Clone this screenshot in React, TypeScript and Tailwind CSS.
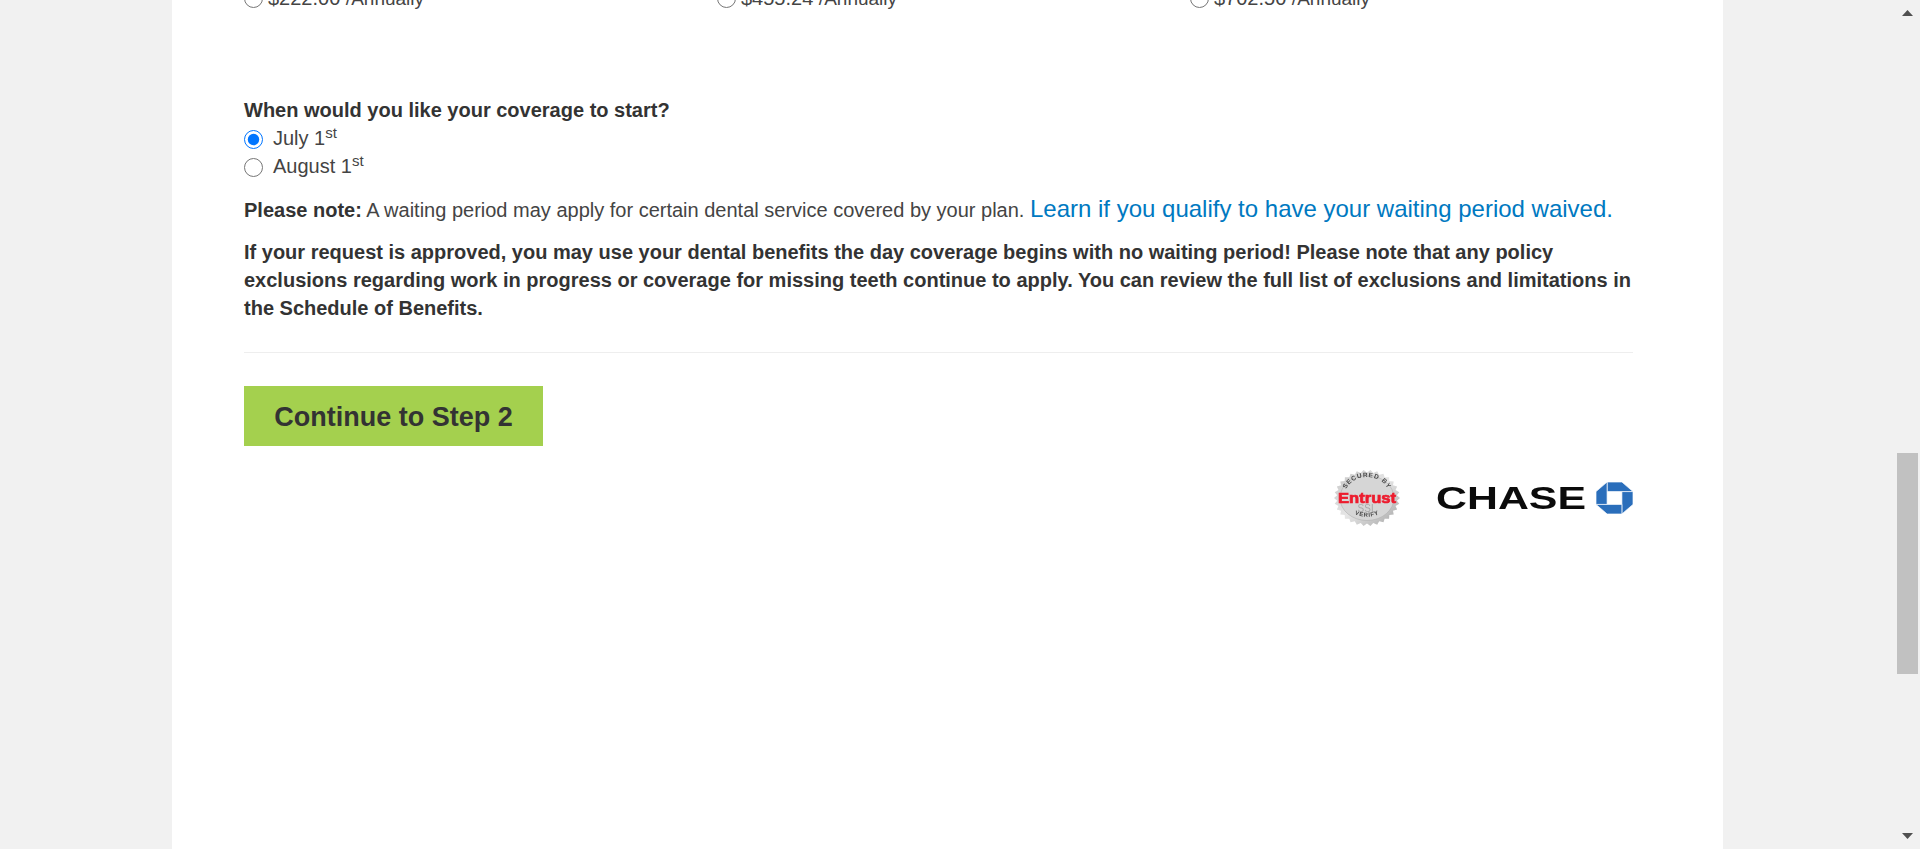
import React from 'react';

const font = "font-['Liberation_Sans',Arial,sans-serif]";

const plans = ['$222.00', '$455.24', '$702.50'];

const EntrustSeal = () => {
  const teeth: string[] = [];
  const n = 30;
  for (let i = 0; i < n * 2; i++) {
    const r = i % 2 === 0 ? 33 : 30;
    const a = (i / (n * 2)) * Math.PI * 2;
    teeth.push(`${(33 + Math.cos(a) * r).toFixed(2)},${(28 + Math.sin(a) * r * 0.85).toFixed(2)}`);
  }
  return (
    <svg width="66" height="56" viewBox="0 0 66 56" className="blur-[0.4px]">
      <defs>
        <linearGradient id="seal" x1="0" y1="0" x2="1" y2="1">
          <stop offset="0" stopColor="#c4c4c4" />
          <stop offset="0.5" stopColor="#e6e6e6" />
          <stop offset="1" stopColor="#a4a4a4" />
        </linearGradient>
        <path id="sealTop" d="M 11 25 A 22 18 0 0 1 55 25" />
        <path id="sealBottom" d="M 13 38 A 22 15 0 0 0 53 38" />
      </defs>
      <polygon points={teeth.join(' ')} fill="url(#seal)" />
      <ellipse cx="33" cy="28" rx="27" ry="22.5" fill="#d6d6d6" stroke="#b0b0b0" strokeWidth="0.6" />
      <text fontSize="6.5" fontWeight="700" fill="#4a4a4a" fontFamily="Liberation Sans, sans-serif" letterSpacing="0.8">
        <textPath href="#sealTop" startOffset="50%" textAnchor="middle">SECURED BY</textPath>
      </text>
      <text fontSize="6" fontWeight="700" fill="#4a4a4a" fontFamily="Liberation Sans, sans-serif" letterSpacing="0.6">
        <textPath href="#sealBottom" startOffset="50%" textAnchor="middle">VERIFY</textPath>
      </text>
      <text x="33" y="42" textAnchor="middle" fontSize="10" fill="#a8a8a8" fontFamily="Liberation Sans, sans-serif">SSL</text>
      <text x="33" y="33" textAnchor="middle" fontSize="15" fontWeight="700" fill="#ed1c2e" stroke="#ed1c2e" strokeWidth="0.7" fontFamily="Liberation Sans, sans-serif" textLength="58" lengthAdjust="spacingAndGlyphs">Entrust</text>
    </svg>
  );
};

const ChaseLogo = () => (
  <div className="flex items-center gap-[10px]">
    <svg width="150" height="32" viewBox="0 0 150 32" className="blur-[0.3px]">
      <text x="0" y="27" fontSize="32" fontWeight="700" fill="#0b0b0b" fontFamily="Liberation Sans, sans-serif" textLength="150" lengthAdjust="spacingAndGlyphs">CHASE</text>
    </svg>
    <svg width="37" height="32" viewBox="0 0 100 100" preserveAspectRatio="none">
      <g fill="#2a6ebb" stroke="#fff" strokeWidth="2">
        <polygon points="30,0 70,0 100,30 30,30" />
        <polygon points="100,30 100,70 70,100 70,30" />
        <polygon points="70,100 30,100 0,70 70,70" />
        <polygon points="0,70 0,30 30,0 30,70" />
      </g>
    </svg>
  </div>
);

export default function App() {
  return (
    <div className={`flex h-[849px] overflow-hidden bg-[#f1f1f1] ${font}`}>
      <div className="flex-1 flex justify-center min-w-0">
        <div className="w-[1551px] bg-white pl-[72px] pr-[90px] text-[20px] text-[#444]">
          <div className="grid grid-cols-3 -mt-[15px] w-[1419px]">
            {plans.map((p) => (
              <label key={p} className="flex items-center gap-[5px] h-[26px]">
                <input type="radio" name="plan" className="size-[19px] m-0" />
                <span>{p} <span className="text-[19px]">/Annually</span></span>
              </label>
            ))}
          </div>

          <p className="mt-[85px] font-bold leading-[28px] text-[#333]">When would you like your coverage to start?</p>
          <label className="flex items-center gap-[10px] h-[28px]">
            <input type="radio" name="start" defaultChecked className="size-[19px] m-0 translate-y-px" />
            <span>July 1<sup className="text-[15px]">st</sup></span>
          </label>
          <label className="flex items-center gap-[10px] h-[28px]">
            <input type="radio" name="start" className="size-[19px] m-0 translate-y-px" />
            <span>August 1<sup className="text-[15px]">st</sup></span>
          </label>

          <p className="mt-[14px] leading-[30px]">
            <strong className="text-[#333]">Please note:</strong> A waiting period may apply for certain dental service covered by your plan.{' '}
            <a href="#" className="text-[24px] text-[#0079c1]">Learn if you qualify to have your waiting period waived.</a>
          </p>
          <p className="mt-[13px] font-bold leading-[28px] text-[#333]">
            If your request is approved, you may use your dental benefits the day coverage begins with no waiting period! Please note that any policy exclusions regarding work in progress or coverage for missing teeth continue to apply. You can review the full list of exclusions and limitations in the Schedule of Benefits.
          </p>

          <hr className="mt-[30px] border-[#eee]" />

          <button className="mt-[33px] block w-[299px] h-[60px] pt-[3px] bg-[#a4d04e] text-[27px] font-bold text-[#333]">
            Continue to Step 2
          </button>

          <div className="mt-[24px] flex items-center justify-end gap-[36px]">
            <EntrustSeal />
            <ChaseLogo />
          </div>
        </div>
      </div>

      {/* scrollbar */}
      <div className="w-[25px] flex flex-col items-center bg-[#f1f1f1] pt-[10px] pb-[10px]">
        <svg width="11" height="6" viewBox="0 0 11 6" className="shrink-0"><polygon points="5.5,0 11,6 0,6" fill="#505050" /></svg>
        <div className="mt-[437px] w-[21px] h-[221px] bg-[#c1c1c1] shrink-0" />
        <div className="flex-1" />
        <svg width="11" height="6" viewBox="0 0 11 6" className="shrink-0"><polygon points="0,0 11,0 5.5,6" fill="#505050" /></svg>
      </div>
    </div>
  );
}
